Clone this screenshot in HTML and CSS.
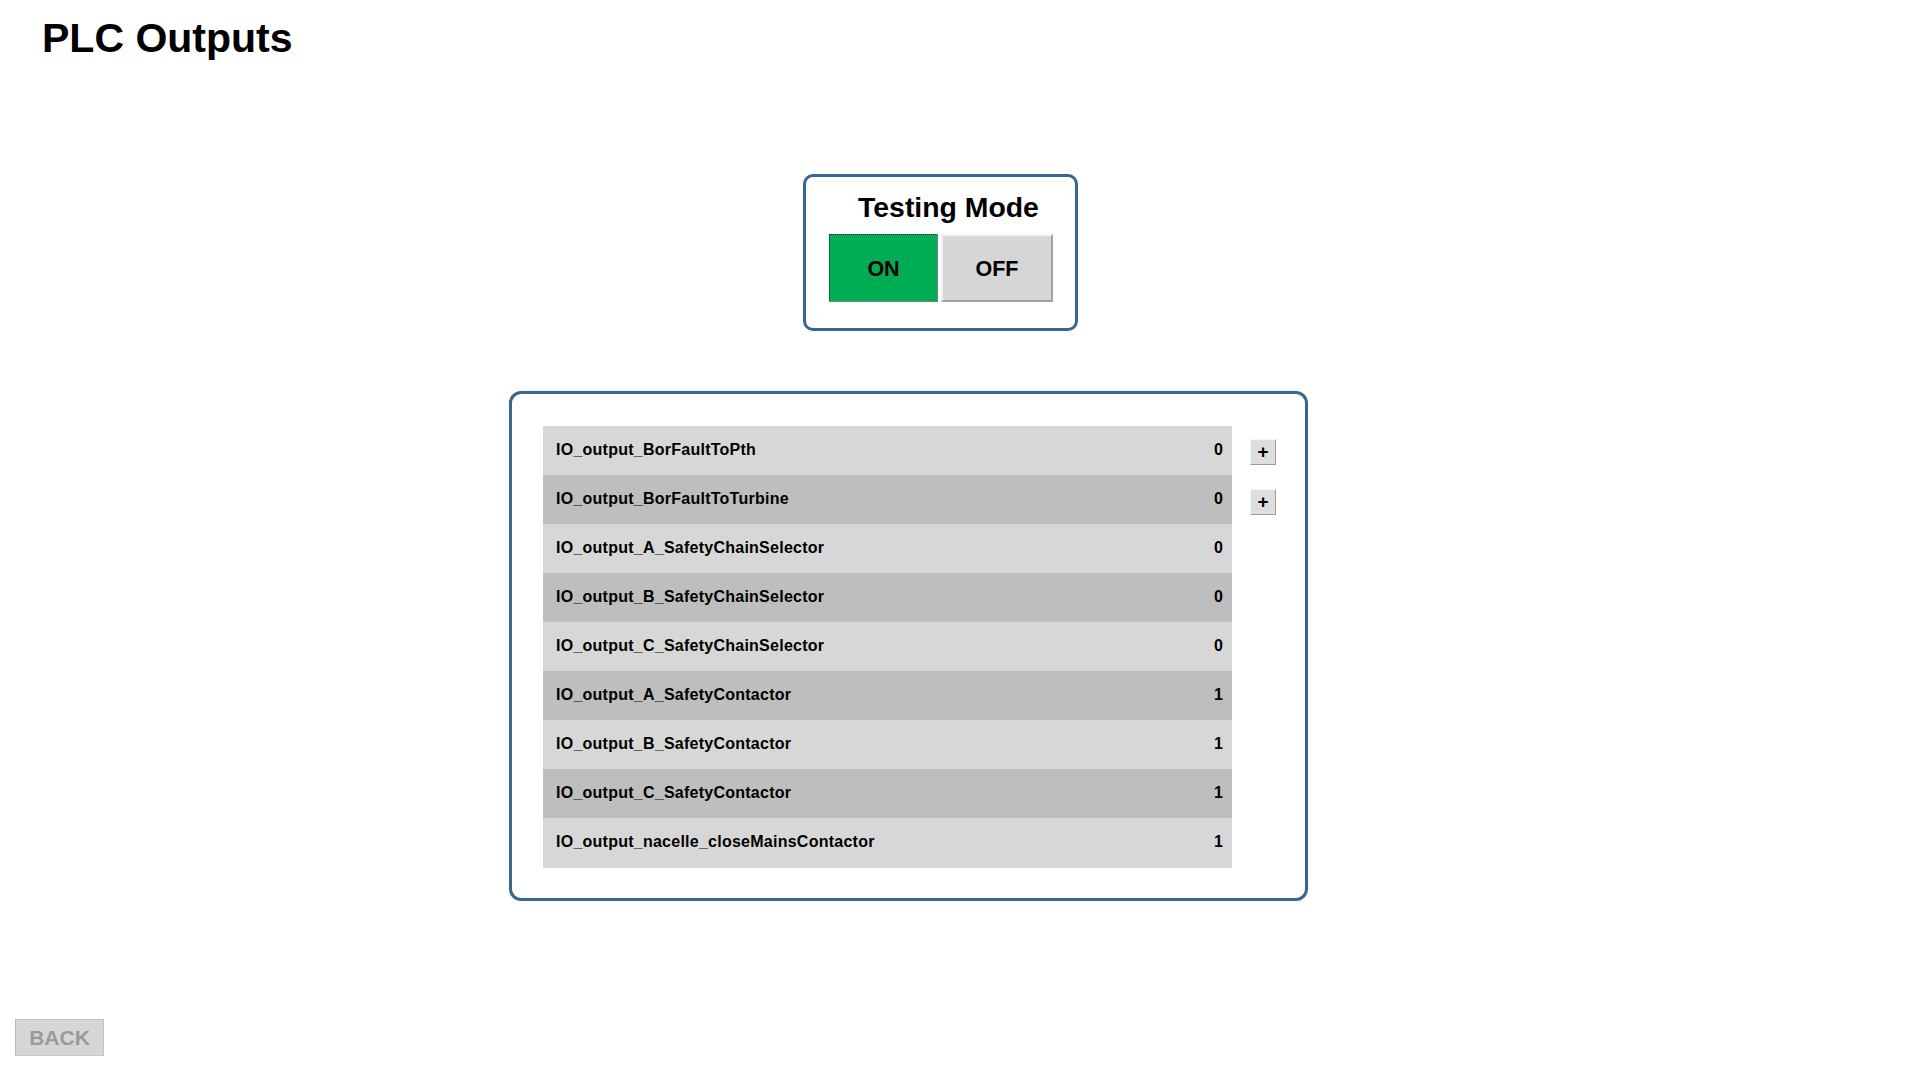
FILE: index.html
```html
<!DOCTYPE html>
<html>
<head>
<meta charset="utf-8">
<title>PLC Outputs</title>
<link rel="stylesheet" href="styles.css">
</head>
<body>
<div class="page">
  <h1 class="title">PLC Outputs</h1>

  <div class="mode">
    <div class="mode-title">Testing Mode</div>
    <div class="mode-buttons">
      <button class="btn btn-on">ON</button>
      <button class="btn btn-off">OFF</button>
    </div>
  </div>

  <div class="panel">
    <div class="table">
      <div class="row light"><span class="name">IO_output_BorFaultToPth</span><span class="val">0</span></div>
      <div class="row dark"><span class="name">IO_output_BorFaultToTurbine</span><span class="val">0</span></div>
      <div class="row light"><span class="name">IO_output_A_SafetyChainSelector</span><span class="val">0</span></div>
      <div class="row dark"><span class="name">IO_output_B_SafetyChainSelector</span><span class="val">0</span></div>
      <div class="row light"><span class="name">IO_output_C_SafetyChainSelector</span><span class="val">0</span></div>
      <div class="row dark"><span class="name">IO_output_A_SafetyContactor</span><span class="val">1</span></div>
      <div class="row light"><span class="name">IO_output_B_SafetyContactor</span><span class="val">1</span></div>
      <div class="row dark"><span class="name">IO_output_C_SafetyContactor</span><span class="val">1</span></div>
      <div class="row light last"><span class="name">IO_output_nacelle_closeMainsContactor</span><span class="val">1</span></div>
    </div>
    <div class="side">
      <button class="plus">+</button>
      <button class="plus">+</button>
    </div>
  </div>

  <button class="back">BACK</button>
</div>
</body>
</html>
```

FILE: styles.css
```css
html, body {
  margin: 0;
  padding: 0;
  background: #ffffff;
}

body {
  font-family: "Liberation Sans", Arial, sans-serif;
  color: #000000;
}

.page {
  display: flex;
  flex-direction: column;
  align-items: flex-start;
  min-height: 100vh;
  box-sizing: border-box;
}

.title {
  margin: 14px 0 0 42px;
  font-size: 41px;
  line-height: 48px;
  font-weight: bold;
}

.mode {
  margin: 112px 0 0 803px;
  width: 275px;
  height: 157px;
  box-sizing: border-box;
  border: 3px solid #386690;
  border-radius: 10px;
}

.mode-title {
  padding: 15px 0 0 16px;
  text-align: center;
  font-size: 28.4px;
  line-height: 31px;
  font-weight: bold;
}

.mode-buttons {
  display: flex;
  gap: 3px;
  margin-top: 11px;
  padding-left: 23px;
}

.btn {
  font-family: "Liberation Sans", Arial, sans-serif;
  font-weight: bold;
  font-size: 21.5px;
  color: #000000;
  height: 68px;
  padding: 2px 0 0 0;
  box-sizing: border-box;
  cursor: pointer;
}

.btn-on {
  width: 109px;
  background: #00ad55;
  border: 1px dotted #202020;
  border-bottom-color: #e060b0;
  border-right-color: #e060b0;
}

.btn-off {
  width: 112px;
  background: #d6d6d6;
  border: 2px solid;
  border-color: #f2f2f2 #a2a2a2 #a2a2a2 #f2f2f2;
}

.panel {
  display: flex;
  align-items: flex-start;
  margin: 60px 0 0 509px;
  width: 799px;
  height: 510px;
  box-sizing: border-box;
  border: 3px solid #386690;
  border-radius: 12px;
  padding: 32px 0 0 31px;
}

.table {
  display: flex;
  flex-direction: column;
  width: 689px;
}

.row {
  display: flex;
  justify-content: space-between;
  height: 49px;
  box-sizing: border-box;
  padding: 0 9px 2px 13px;
  line-height: 47px;
  font-size: 16px;
  font-weight: bold;
}

.name {
  letter-spacing: 0.25px;
}

.row.last {
  height: 50px;
}

.light {
  background: #d7d7d7;
}

.dark {
  background: #bebebe;
}

.side {
  display: flex;
  flex-direction: column;
  gap: 24px;
  margin: 13px 0 0 18px;
}

.plus {
  width: 26px;
  height: 26px;
  padding: 0;
  box-sizing: border-box;
  background: #dedede;
  border: 1px solid;
  border-color: #f6f6f6 #9c9c9c #9c9c9c #f6f6f6;
  font-family: "Liberation Sans", Arial, sans-serif;
  font-weight: bold;
  font-size: 19px;
  line-height: 24px;
  color: #000000;
}

.back {
  margin: auto 0 23px 15px;
  width: 89px;
  height: 37px;
  padding: 0;
  box-sizing: border-box;
  background: #d6d6d6;
  border: 1px solid;
  border-color: #c4c4c4 #c4c4c4 #c8c8c8 #b8b8b8;
  font-family: "Liberation Sans", Arial, sans-serif;
  font-weight: bold;
  font-size: 21px;
  color: #9a9a9a;
}
```
